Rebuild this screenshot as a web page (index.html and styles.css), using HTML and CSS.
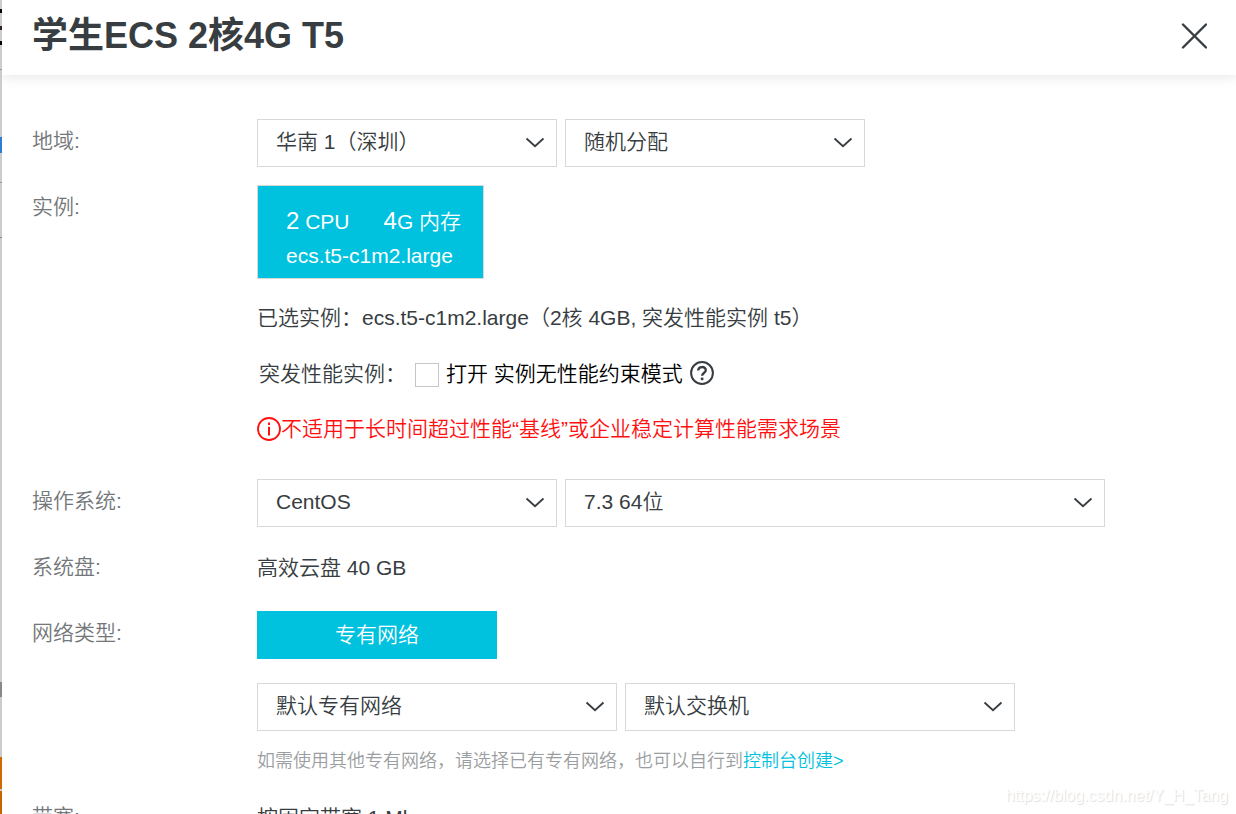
FILE: index.html
```html
<!DOCTYPE html>
<html lang="zh-CN">
<head>
<meta charset="utf-8">
<meta name="viewport" content="width=device-width, initial-scale=1">
<title>学生ECS 2核4G T5</title>
<link rel="stylesheet" href="styles.css">
</head>
<body>
<svg class="sprite" aria-hidden="true">
  <symbol id="chevron" viewBox="0 0 20 12"><path d="M1.500 1.500 10 9.200 18.500 1.500" fill="none" stroke="currentColor" stroke-width="1.800"/></symbol>
</svg>
<main class="dialog">
  <header class="dialog-header">
    <h1 class="title">学生ECS 2核4G T5</h1>
    <button class="close" type="button" aria-label="关闭">
      <svg viewBox="0 0 26 26" width="26" height="26"><path d="M2 1.500 25 24.500M25 1.500 2 24.500" fill="none" stroke="currentColor" stroke-width="2.400" stroke-linecap="round"/></svg>
    </button>
  </header>
  <form class="form">
    <section class="row">
      <label class="label" for="region">地域:</label>
      <div class="fields">
        <div class="select w300"><select id="region"><option>华南 1（深圳）</option></select><svg class="chevron"><use href="#chevron"/></svg></div>
        <div class="select w300"><select aria-label="可用区"><option>随机分配</option></select><svg class="chevron"><use href="#chevron"/></svg></div>
      </div>
    </section>
    <section class="row instance-row">
      <span class="label">实例:</span>
      <div class="instance">
        <button class="card" type="button">
          <span class="spec"><span><b>2</b> CPU</span><span><b>4</b>G 内存</span></span>
          <span class="model">ecs.t5-c1m2.large</span>
        </button>
        <p class="line">已选实例：ecs.t5-c1m2.large（2核 4GB, 突发性能实例 t5）</p>
        <div class="line burst">
          <span>突发性能实例：</span>
          <input class="check" type="checkbox" id="unlimited">
          <label class="check-label" for="unlimited">打开 实例无性能约束模式</label>
          <svg class="help" viewBox="0 0 24 24" width="24" height="24" fill="none" stroke="currentColor"><circle cx="12" cy="12" r="10.900" stroke-width="2"/><path d="M8.200 9.600C8.200 4.900 15.800 4.900 15.800 9.200 15.800 11.700 12.100 11.800 12.100 14.800" stroke-width="2.300"/><path d="M12.100 16.600v2.600" stroke-width="2.600"/></svg>
        </div>
        <p class="line warning">
          <svg viewBox="0 0 24 24" width="24" height="24" fill="none" stroke="currentColor"><circle cx="12" cy="12" r="11" stroke-width="1.800"/><path d="M12 5.500v2.600M12 9.800v8.700" stroke-width="2"/></svg>
          <span>不适用于长时间超过性能“基线”或企业稳定计算性能需求场景</span>
        </p>
      </div>
    </section>
    <section class="row">
      <label class="label" for="os">操作系统:</label>
      <div class="fields">
        <div class="select w300"><select id="os"><option>CentOS</option></select><svg class="chevron"><use href="#chevron"/></svg></div>
        <div class="select w540"><select aria-label="系统版本"><option>7.3 64位</option></select><svg class="chevron"><use href="#chevron"/></svg></div>
      </div>
    </section>
    <section class="row disk-row">
      <span class="label">系统盘:</span>
      <p class="value">高效云盘 40 GB</p>
    </section>
    <section class="row">
      <span class="label">网络类型:</span>
      <div class="network">
        <button class="network-type" type="button">专有网络</button>
        <div class="fields">
          <div class="select w360"><select aria-label="专有网络"><option>默认专有网络</option></select><svg class="chevron"><use href="#chevron"/></svg></div>
          <div class="select w390"><select aria-label="交换机"><option>默认交换机</option></select><svg class="chevron"><use href="#chevron"/></svg></div>
        </div>
        <p class="hint">如需使用其他专有网络，请选择已有专有网络，也可以自行到<a href="#">控制台创建&gt;</a></p>
      </div>
    </section>
    <section class="row">
      <span class="label">带宽:</span>
      <p class="value">按固定带宽 1 Mbps</p>
    </section>
  </form>
</main>
<div class="watermark">https://blog.csdn.net/Y_H_Tang</div>
</body>
</html>
```
FILE: styles.css
```css
* { box-sizing: border-box; }

body {
  margin: 0;
  height: 100vh;
  overflow: hidden;
  padding-left: 2px;
  color: #373d41;
  font: 350 21px/32px "Liberation Sans", "Noto Sans CJK SC", sans-serif;
  background: linear-gradient(#ccc 0 9px, #000 9px 13px, #ccc 13px 26px, #322 26px 30px, #ccc 30px 41px, #000 41px 45px, #ccc 45px 69px, #999 69px 70px, #ccc 70px 137px, #2d7dd2 137px 153px, #ccc 153px 182px, #999 182px 183px, #ccc 183px 237px, #888 237px 238px, #ccc 238px 682px, #888 682px 697px, #ccc 697px 757px, #d26900 757px 789px, #ccc 789px 791px, #c86400 791px);
}

p, h1 { margin: 0; }
button, select, input { margin: 0; font: inherit; color: inherit; }
.sprite { position: absolute; width: 0; height: 0; }

.dialog { height: 100%; overflow: hidden; background: #fff; }

.dialog-header {
  display: flex;
  align-items: center;
  justify-content: space-between;
  height: 75px;
  padding: 0 29px 4px 30px;
  box-shadow: 0 2px 12px rgba(0, 0, 0, .1);
}
.title { font-size: 36px; line-height: 48px; font-weight: 700; }
.close { display: flex; padding: 0; border: 0; background: none; }

.form { display: flex; flex-direction: column; gap: 18px; padding: 44px 30px 0; }
.row { display: grid; grid-template-columns: 225px 1fr; align-items: start; }
.instance-row { padding-bottom: 16px; }
.disk-row { padding-bottom: 2px; }
.label { color: #73777a; line-height: 44px; }
.value { line-height: 46px; }

.fields { display: flex; gap: 8px; }
.select { position: relative; height: 48px; }
.select select {
  appearance: none;
  width: 100%;
  height: 100%;
  padding: 0 44px 2px 18px;
  border: 1px solid #d7d8d9;
  border-radius: 0;
  background: #fff;
}
.chevron { position: absolute; right: 12px; top: 18px; width: 20px; height: 12px; pointer-events: none; }
.w300 { width: 300px; }
.w360 { width: 360px; }
.w390 { width: 390px; }
.w540 { width: 540px; }

.instance { display: flex; flex-direction: column; align-items: flex-start; }
.line { margin-top: 23px; }
.card {
  display: flex;
  flex-direction: column;
  gap: 2px;
  padding: 19px 22px 4px 28px;
  border: 1px solid #d7d8d9;
  background: #00c1de;
  color: #fff;
  text-align: left;
  height: 94px;
}
.spec { display: flex; gap: 34px; }
.spec b { font-size: 24px; font-weight: 350; }

.burst { display: flex; align-items: center; margin-top: 24px; padding-left: 2px; }
.check {
  appearance: none;
  width: 24px;
  height: 24px;
  margin: 2px 7px 0 9px;
  border: 1px solid #c4c6c8;
  background: #fff;
}
.check-label { color: #000; }
.help { margin: 0 0 3px 7px; }
.warning { display: flex; align-items: center; color: #f11; }

.network-type { display: block; width: 240px; height: 48px; margin-bottom: 24px; padding: 0; border: 0; background: #00c1de; color: #fff; }
.hint { margin-top: 14px; font-size: 18px; line-height: 32px; color: #9b9ea0; }
.hint a { color: #00c1de; text-decoration: none; }

.watermark {
  position: absolute;
  right: 8px;
  bottom: 8px;
  font-size: 16px;
  line-height: 20px;
  color: #fff;
  text-shadow: 1px 1px 1px #ddd;
}
```
